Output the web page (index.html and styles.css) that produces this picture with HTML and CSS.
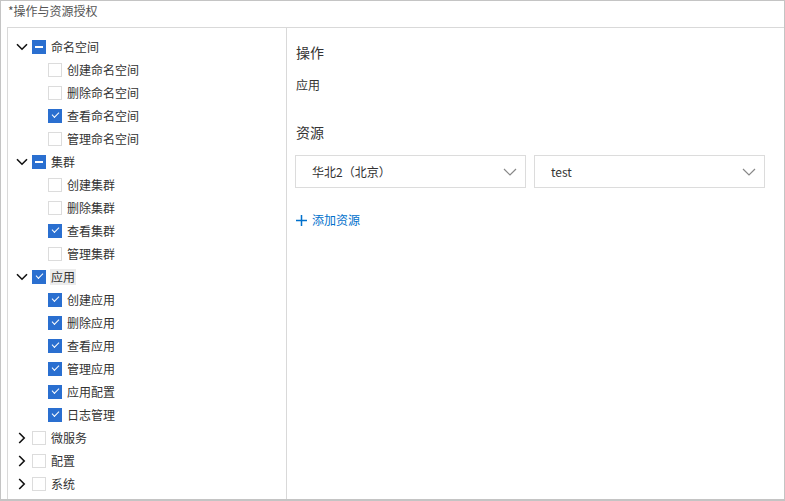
FILE: index.html
```html
<!DOCTYPE html>
<html lang="zh">
<head>
<meta charset="utf-8">
<link rel="stylesheet" href="styles.css">
</head>
<body>
<div class="frame">
  <div class="label">*操作与资源授权</div>
  <div class="box">
    <div class="tree">
      <div class="row lvl1"><span class="arrow"><svg viewBox="0 0 12 8" width="12" height="8"><path d="M1 1.2 L6 6.2 L11 1.2" fill="none" stroke="#111" stroke-width="1.6"/></svg></span><span class="cb ind"></span><span class="txt">命名空间</span></div>
      <div class="row lvl2"><span class="cb"></span><span class="txt">创建命名空间</span></div>
      <div class="row lvl2"><span class="cb"></span><span class="txt">删除命名空间</span></div>
      <div class="row lvl2"><span class="cb on"></span><span class="txt">查看命名空间</span></div>
      <div class="row lvl2"><span class="cb"></span><span class="txt">管理命名空间</span></div>
      <div class="row lvl1"><span class="arrow"><svg viewBox="0 0 12 8" width="12" height="8"><path d="M1 1.2 L6 6.2 L11 1.2" fill="none" stroke="#111" stroke-width="1.6"/></svg></span><span class="cb ind"></span><span class="txt">集群</span></div>
      <div class="row lvl2"><span class="cb"></span><span class="txt">创建集群</span></div>
      <div class="row lvl2"><span class="cb"></span><span class="txt">删除集群</span></div>
      <div class="row lvl2"><span class="cb on"></span><span class="txt">查看集群</span></div>
      <div class="row lvl2"><span class="cb"></span><span class="txt">管理集群</span></div>
      <div class="row lvl1"><span class="arrow"><svg viewBox="0 0 12 8" width="12" height="8"><path d="M1 1.2 L6 6.2 L11 1.2" fill="none" stroke="#111" stroke-width="1.6"/></svg></span><span class="cb on"></span><span class="txt sel">应用</span></div>
      <div class="row lvl2"><span class="cb on"></span><span class="txt">创建应用</span></div>
      <div class="row lvl2"><span class="cb on"></span><span class="txt">删除应用</span></div>
      <div class="row lvl2"><span class="cb on"></span><span class="txt">查看应用</span></div>
      <div class="row lvl2"><span class="cb on"></span><span class="txt">管理应用</span></div>
      <div class="row lvl2"><span class="cb on"></span><span class="txt">应用配置</span></div>
      <div class="row lvl2"><span class="cb on"></span><span class="txt">日志管理</span></div>
      <div class="row lvl1"><span class="arrow"><svg viewBox="0 0 8 12" width="8" height="12"><path d="M1.2 1 L6.2 6 L1.2 11" fill="none" stroke="#111" stroke-width="1.6"/></svg></span><span class="cb"></span><span class="txt">微服务</span></div>
      <div class="row lvl1"><span class="arrow"><svg viewBox="0 0 8 12" width="8" height="12"><path d="M1.2 1 L6.2 6 L1.2 11" fill="none" stroke="#111" stroke-width="1.6"/></svg></span><span class="cb"></span><span class="txt">配置</span></div>
      <div class="row lvl1"><span class="arrow"><svg viewBox="0 0 8 12" width="8" height="12"><path d="M1.2 1 L6.2 6 L1.2 11" fill="none" stroke="#111" stroke-width="1.6"/></svg></span><span class="cb"></span><span class="txt">系统</span></div>
    </div>
    <div class="detail">
      <div class="heading">操作</div>
      <div class="op">应用</div>
      <div class="heading res">资源</div>
      <div class="selects">
        <div class="select"><span>华北2（北京）</span><svg viewBox="0 0 14 8" width="14" height="8"><path d="M1 1 L7 7 L13 1" fill="none" stroke="#888" stroke-width="1.2"/></svg></div>
        <div class="select"><span>test</span><svg viewBox="0 0 14 8" width="14" height="8"><path d="M1 1 L7 7 L13 1" fill="none" stroke="#888" stroke-width="1.2"/></svg></div>
      </div>
      <div class="add"><svg viewBox="0 0 11 11" width="11" height="11"><path d="M5.5 0 V11 M0 5.5 H11" stroke="#0070cc" stroke-width="1.5"/></svg><span>添加资源</span></div>
    </div>
  </div>
</div>
</body>
</html>
```

FILE: styles.css
```css
html, body {
  margin: 0;
  padding: 0;
  background: #fff;
}
body {
  font-family: "Noto Sans CJK SC", "Liberation Sans", sans-serif;
  font-size: 12px;
  color: #333;
}
.frame {
  width: 785px;
  height: 501px;
  box-sizing: border-box;
  border: 1px solid #c4c4c4;
  border-bottom-width: 2px;
  display: flex;
  flex-direction: column;
}
.label {
  height: 26px;
  line-height: 20px;
  padding-left: 7px;
  color: #555;
  font-size: 12px;
}
.box {
  flex: 1;
  margin-left: 6px;
  border-top: 1px solid #d9d9d9;
  border-left: 1px solid #d9d9d9;
  display: flex;
  min-height: 0;
}
.tree {
  width: 279px;
  border-right: 1px solid #d9d9d9;
  padding-top: 7px;
  box-sizing: border-box;
  flex: none;
}
.row {
  height: 23px;
  display: flex;
  align-items: center;
}
.row.lvl1 { padding-left: 6px; }
.row.lvl2 { padding-left: 40px; }
.arrow {
  width: 16px;
  height: 16px;
  display: flex;
  align-items: center;
  justify-content: center;
  margin-right: 2px;
}
.cb {
  width: 14px;
  height: 14px;
  box-sizing: border-box;
  border: 1px solid #dcdcdc;
  background: #fff;
  position: relative;
  flex: none;
}
.cb.on, .cb.ind {
  background: #2a6fd0;
  border-color: #2a6fd0;
}
.cb.on::after {
  content: "";
  position: absolute;
  left: 3px;
  top: 2px;
  width: 6px;
  height: 3px;
  border-left: 1.5px solid #fff;
  border-bottom: 1.5px solid #fff;
  transform: rotate(-45deg);
}
.cb.ind::after {
  content: "";
  position: absolute;
  left: 2px;
  right: 2px;
  top: 5px;
  height: 2px;
  background: #fff;
}
.txt {
  margin-left: 4px;
  line-height: 16px;
  padding: 0 1px;
  color: #333;
}
.txt.sel {
  background: #ececec;
}
.detail {
  flex: 1;
  padding: 13px 18px 0 8px;
}
.heading {
  font-size: 14px;
  line-height: 22px;
  color: #333;
  padding-left: 1px;
}
.op {
  margin-top: 11px;
  line-height: 22px;
  padding-left: 1px;
}
.heading.res {
  margin-top: 25px;
}
.selects {
  margin-top: 12px;
  display: flex;
  gap: 8px;
}
.select {
  width: 231px;
  height: 33px;
  box-sizing: border-box;
  border: 1px solid #dcdcdc;
  display: flex;
  align-items: center;
  justify-content: space-between;
  padding: 0 8px 0 16px;
  color: #333;
}
.add {
  margin-top: 22px;
  display: flex;
  align-items: center;
  gap: 5px;
  color: #0070cc;
  padding-left: 1px;
  line-height: 20px;
}
```
